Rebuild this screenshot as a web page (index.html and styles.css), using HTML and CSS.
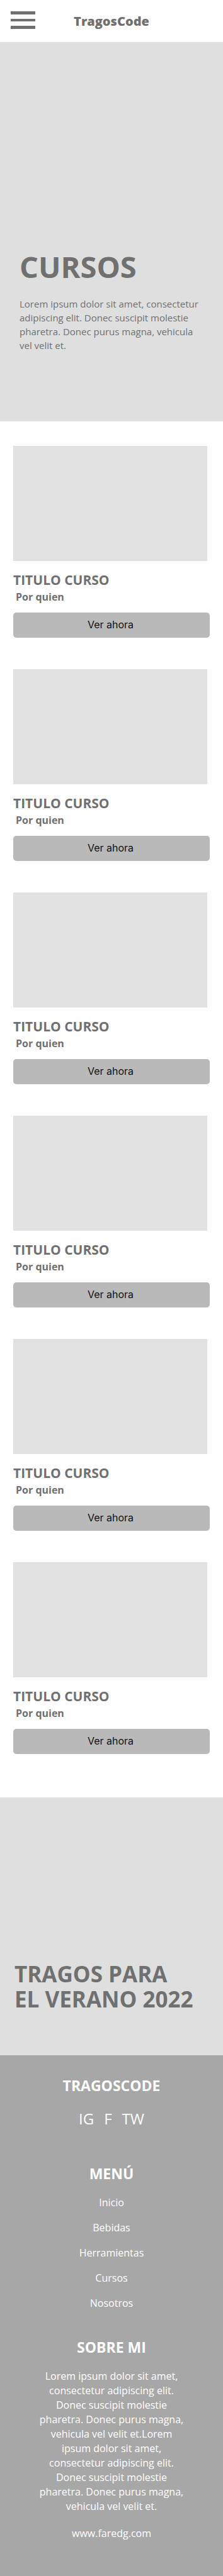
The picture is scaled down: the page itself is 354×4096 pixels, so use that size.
FILE: index.html
```html
<!DOCTYPE html>
<html lang="es">
<head>
<meta charset="utf-8">
<meta name="viewport" content="width=device-width, initial-scale=1">
<title>TragosCode - Cursos</title>
<link rel="stylesheet" href="styles.css">
</head>
<body>
<header class="topbar">
  <button class="menu-button" type="button" aria-label="Abrir menú">
    <span class="menu-bar"></span>
    <span class="menu-bar menu-bar-thin"></span>
    <span class="menu-bar"></span>
  </button>
  <a class="brand" href="#">TragosCode</a>
</header>
<main>
  <section class="hero">
    <h1 class="hero-title">CURSOS</h1>
    <p class="hero-text">Lorem ipsum dolor sit amet, consectetur adipiscing elit. Donec suscipit molestie pharetra. Donec purus magna, vehicula vel velit et.</p>
  </section>
  <section class="courses">
    <article class="course">
      <div class="course-image"></div>
      <h2 class="course-title">TITULO CURSO</h2>
      <p class="course-author">Por quien</p>
      <button class="course-button" type="button">Ver ahora</button>
    </article>
    <article class="course">
      <div class="course-image"></div>
      <h2 class="course-title">TITULO CURSO</h2>
      <p class="course-author">Por quien</p>
      <button class="course-button" type="button">Ver ahora</button>
    </article>
    <article class="course">
      <div class="course-image"></div>
      <h2 class="course-title">TITULO CURSO</h2>
      <p class="course-author">Por quien</p>
      <button class="course-button" type="button">Ver ahora</button>
    </article>
    <article class="course">
      <div class="course-image"></div>
      <h2 class="course-title">TITULO CURSO</h2>
      <p class="course-author">Por quien</p>
      <button class="course-button" type="button">Ver ahora</button>
    </article>
    <article class="course">
      <div class="course-image"></div>
      <h2 class="course-title">TITULO CURSO</h2>
      <p class="course-author">Por quien</p>
      <button class="course-button" type="button">Ver ahora</button>
    </article>
    <article class="course">
      <div class="course-image"></div>
      <h2 class="course-title">TITULO CURSO</h2>
      <p class="course-author">Por quien</p>
      <button class="course-button" type="button">Ver ahora</button>
    </article>
  </section>
  <section class="banner">
    <h2 class="banner-title">TRAGOS PARA<br>EL VERANO 2022</h2>
  </section>
</main>
<footer class="footer">
  <h2 class="footer-title">TRAGOSCODE</h2>
  <div class="social">
    <a class="footer-link" href="#">IG</a>
    <a class="footer-link" href="#">F</a>
    <a class="footer-link" href="#">TW</a>
  </div>
  <h2 class="footer-title">MENÚ</h2>
  <nav class="footer-menu">
    <a class="footer-link" href="#">Inicio</a>
    <a class="footer-link" href="#">Bebidas</a>
    <a class="footer-link" href="#">Herramientas</a>
    <a class="footer-link" href="#">Cursos</a>
    <a class="footer-link" href="#">Nosotros</a>
  </nav>
  <h2 class="footer-title">SOBRE MI</h2>
  <p class="about">Lorem ipsum dolor sit amet, consectetur adipiscing elit. Donec suscipit molestie pharetra. Donec purus magna, vehicula vel velit et.Lorem ipsum dolor sit amet, consectetur adipiscing elit. Donec suscipit molestie pharetra. Donec purus magna, vehicula vel velit et.</p>
  <a class="footer-link site" href="#">www.faredg.com</a>
</footer>
</body>
</html>
```
FILE: styles.css
```css
* {
  box-sizing: border-box;
}

body {
  margin: 0;
  background: #fff;
  color: #707070;
  font-family: "Open Sans", "Noto Sans", sans-serif;
  font-size: 16px;
}

h1,
h2,
p {
  margin: 0;
}

a {
  color: inherit;
  text-decoration: none;
}

.topbar {
  display: grid;
  grid-template-columns: 1fr auto 1fr;
  align-items: center;
  height: 67px;
  padding: 0 17px;
}

.menu-button {
  display: flex;
  flex-direction: column;
  gap: 7px;
  width: 39px;
  padding: 0;
  margin-bottom: 3px;
  border: 0;
  background: none;
}

.menu-bar {
  width: 100%;
  height: 5px;
  background: #707070;
}

.menu-bar-thin {
  height: 4px;
}

.brand {
  font-size: 20px;
  line-height: 28px;
  font-weight: 800;
}

.hero {
  display: flex;
  flex-direction: column;
  justify-content: flex-end;
  min-height: 603px;
  padding: 0 31px 110px;
  background: #dfdfdf;
}

.hero-title {
  margin-bottom: 20px;
  font-size: 47px;
  line-height: 56px;
}

.hero-text {
  font-size: 15px;
  line-height: 22px;
}

.courses {
  display: flex;
  flex-direction: column;
  gap: 50px;
  padding: 39px 21px 69px;
}

.course {
  display: flex;
  flex-direction: column;
}

.course-image {
  height: 183px;
  margin: 0 4px 16px 0;
  background: #e2e2e2;
}

.course-title {
  font-size: 21px;
  line-height: 28px;
}

.course-author {
  margin: 1px 0 13px;
  padding-left: 4px;
  font-weight: 700;
  line-height: 24px;
}

.course-button {
  height: 40px;
  padding: 0 3px 2px 0;
  border: 0;
  border-radius: 5px;
  background: #b9b9b9;
  color: #111;
  font-family: Inter, sans-serif;
  font-size: 16px;
}

.banner {
  display: flex;
  flex-direction: column;
  justify-content: flex-end;
  min-height: 410px;
  padding: 0 23px 69px;
  background: #dfdfdf;
}

.banner-title {
  font-size: 35px;
  line-height: 40px;
}

.footer {
  display: flex;
  flex-direction: column;
  align-items: center;
  padding: 32px 56px 56px;
  background: #a7a7a7;
  color: #fff;
  text-align: center;
}

.footer-title {
  font-size: 23px;
  line-height: 32px;
}

.social {
  display: flex;
  gap: 16px;
  margin: 21px 0 55px;
  font-size: 24px;
  line-height: 32px;
}

.footer-menu {
  display: flex;
  flex-direction: column;
  margin: 10px 0 34px;
  line-height: 40px;
}

.about {
  margin: 19px 0 20px;
  line-height: 23px;
}

.site {
  line-height: 23px;
}
```
